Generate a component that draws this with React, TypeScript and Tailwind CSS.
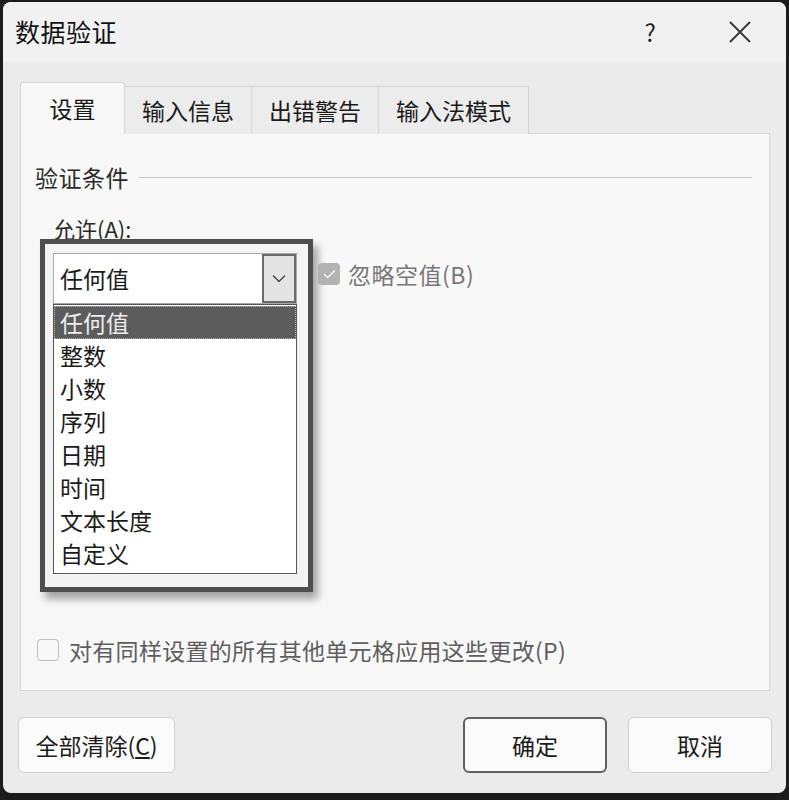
import { Check } from 'lucide-react'

const tabs = ['设置', '输入信息', '出错警告', '输入法模式']
const options = ['任何值', '整数', '小数', '序列', '日期', '时间', '文本长度', '自定义']

function Tabs() {
  return (
    <div className="relative z-10 -mb-px flex items-end">
      {tabs.map((t, i) =>
        i === 0 ? (
          <div
            key={t}
            className="flex h-[52px] w-[105px] items-center justify-center rounded-t-[3px] border border-b-0 border-[#d6d6d6] bg-[#f8f8f8] text-[23px] text-[#1a1a1a]"
          >
            {t}
          </div>
        ) : (
          <div
            key={t}
            className="-ml-px flex h-[48px] items-center justify-center border border-b-0 border-[#d6d6d6] bg-[#ececec] px-[17px] text-[23px] text-[#1a1a1a]"
          >
            {t}
          </div>
        ),
      )}
    </div>
  )
}

function AllowBox() {
  return (
    <div className="-mt-[3px] ml-[19px] flex items-start">
      {/* highlighted combobox with its open list */}
      <div className="w-[273px] border-[5px] border-[#4e4e4e] bg-[#f3f3f3] pb-[13px] pl-[8px] pt-[9px] shadow-[5px_7px_8px_rgba(0,0,0,0.35)]">
        <div className="flex h-[51px] w-[244px] border border-[#a8a8a8] bg-white">
          <div className="flex flex-1 items-center pl-[6px] text-[23px] text-[#1a1a1a]">任何值</div>
          <div className="flex w-[34px] items-center justify-center border-2 border-[#6a6a6a] bg-[#e4e4e4]">
            <svg width="14" height="9" viewBox="0 0 14 9" fill="none">
              <path d="M1 1.5 L7 7.5 L13 1.5" stroke="#444" strokeWidth="1.4" />
            </svg>
          </div>
        </div>
        <div className="h-[270px] w-[244px] border border-[#555] bg-white pt-px">
          {options.map((o, i) => (
            <div
              key={o}
              className={
                i === 0
                  ? 'flex h-[33px] items-center border border-dotted border-[#b5b5b5] bg-[#5c5c5c] pl-[5px] text-[23px] leading-none text-[#eeeeee]'
                  : 'flex h-[33px] items-center pl-[6px] text-[23px] leading-none text-[#1a1a1a]'
              }
            >
              {o}
            </div>
          ))}
        </div>
      </div>
      <div className="ml-[5px] mt-[21px] flex items-center gap-[8px]">
        <div className="flex h-[22px] w-[22px] items-center justify-center rounded-[4px] bg-[#b3b3b3]">
          <Check className="h-[15px] w-[15px] text-white" strokeWidth={2} />
        </div>
        <span className="text-[23px] leading-[28px] tracking-[0.5px] text-[#777]">忽略空值(B)</span>
      </div>
    </div>
  )
}

export default function App() {
  return (
    <div className="h-[800px] w-[789px] bg-[#1c1c1c] pb-[7px] pl-[3px] pr-[3px] pt-[2px] font-['Noto_Sans_CJK_SC','Noto_Sans',sans-serif]">
      <div className="flex h-full flex-col overflow-hidden rounded-[8px] bg-[#ebebeb]">
        {/* title bar */}
        <div className="flex h-[60px] shrink-0 items-center bg-[#f1f1f1] pl-[12px]">
          <span className="text-[25px] tracking-[0.5px] text-[#111]">数据验证</span>
          <span className="ml-auto text-[24px] text-[#222]">?</span>
          <svg className="ml-[73px] mr-[35px]" width="22" height="22" viewBox="0 0 22 22" fill="none">
            <path d="M1 1 L21 21 M21 1 L1 21" stroke="#333" strokeWidth="1.8" />
          </svg>
        </div>

        <div className="pl-[17px] pr-[16px] pt-[20px]">
          <Tabs />
          <div className="flex h-[558px] flex-col border border-[#d6d6d6] bg-[#f8f8f8]">
            <div className="flex items-center pl-[14px] pr-[17px] pt-[28px]">
              <span className="text-[23px] leading-[30px] tracking-[0.5px] text-[#2a2a2a]">验证条件</span>
              <div className="ml-[10px] h-px flex-1 bg-[#c9c9c9]" />
            </div>
            <div className="ml-[32px] mt-[22px] text-[22px] leading-[28px] text-[#2a2a2a]">允许(A):</div>
            <AllowBox />
            <div className="ml-[16px] mt-[43px] flex items-center gap-[10px]">
              <div className="h-[22px] w-[22px] rounded-[4px] border border-[#bdbdbd] bg-[#f8f8f8]" />
              <span className="text-[23px] leading-[30px] tracking-[0.3px] text-[#5e5e5e]">对有同样设置的所有其他单元格应用这些更改(P)</span>
            </div>
          </div>
        </div>

        {/* buttons */}
        <div className="mt-[26px] flex pl-[15px] pr-[14px]">
          <button className="flex h-[56px] w-[157px] items-center justify-center rounded-[6px] border border-[#cfcfcf] bg-[#fbfbfb] text-[23px] text-[#1a1a1a]">
            全部清除(<span className="underline">C</span>)
          </button>
          <button className="ml-auto flex h-[56px] w-[144px] items-center justify-center rounded-[6px] border-2 border-[#616161] bg-[#fbfbfb] text-[23px] text-[#1a1a1a]">
            确定
          </button>
          <button className="ml-[21px] flex h-[56px] w-[144px] items-center justify-center rounded-[6px] border border-[#cfcfcf] bg-[#fbfbfb] text-[23px] text-[#1a1a1a]">
            取消
          </button>
        </div>
      </div>
    </div>
  )
}
